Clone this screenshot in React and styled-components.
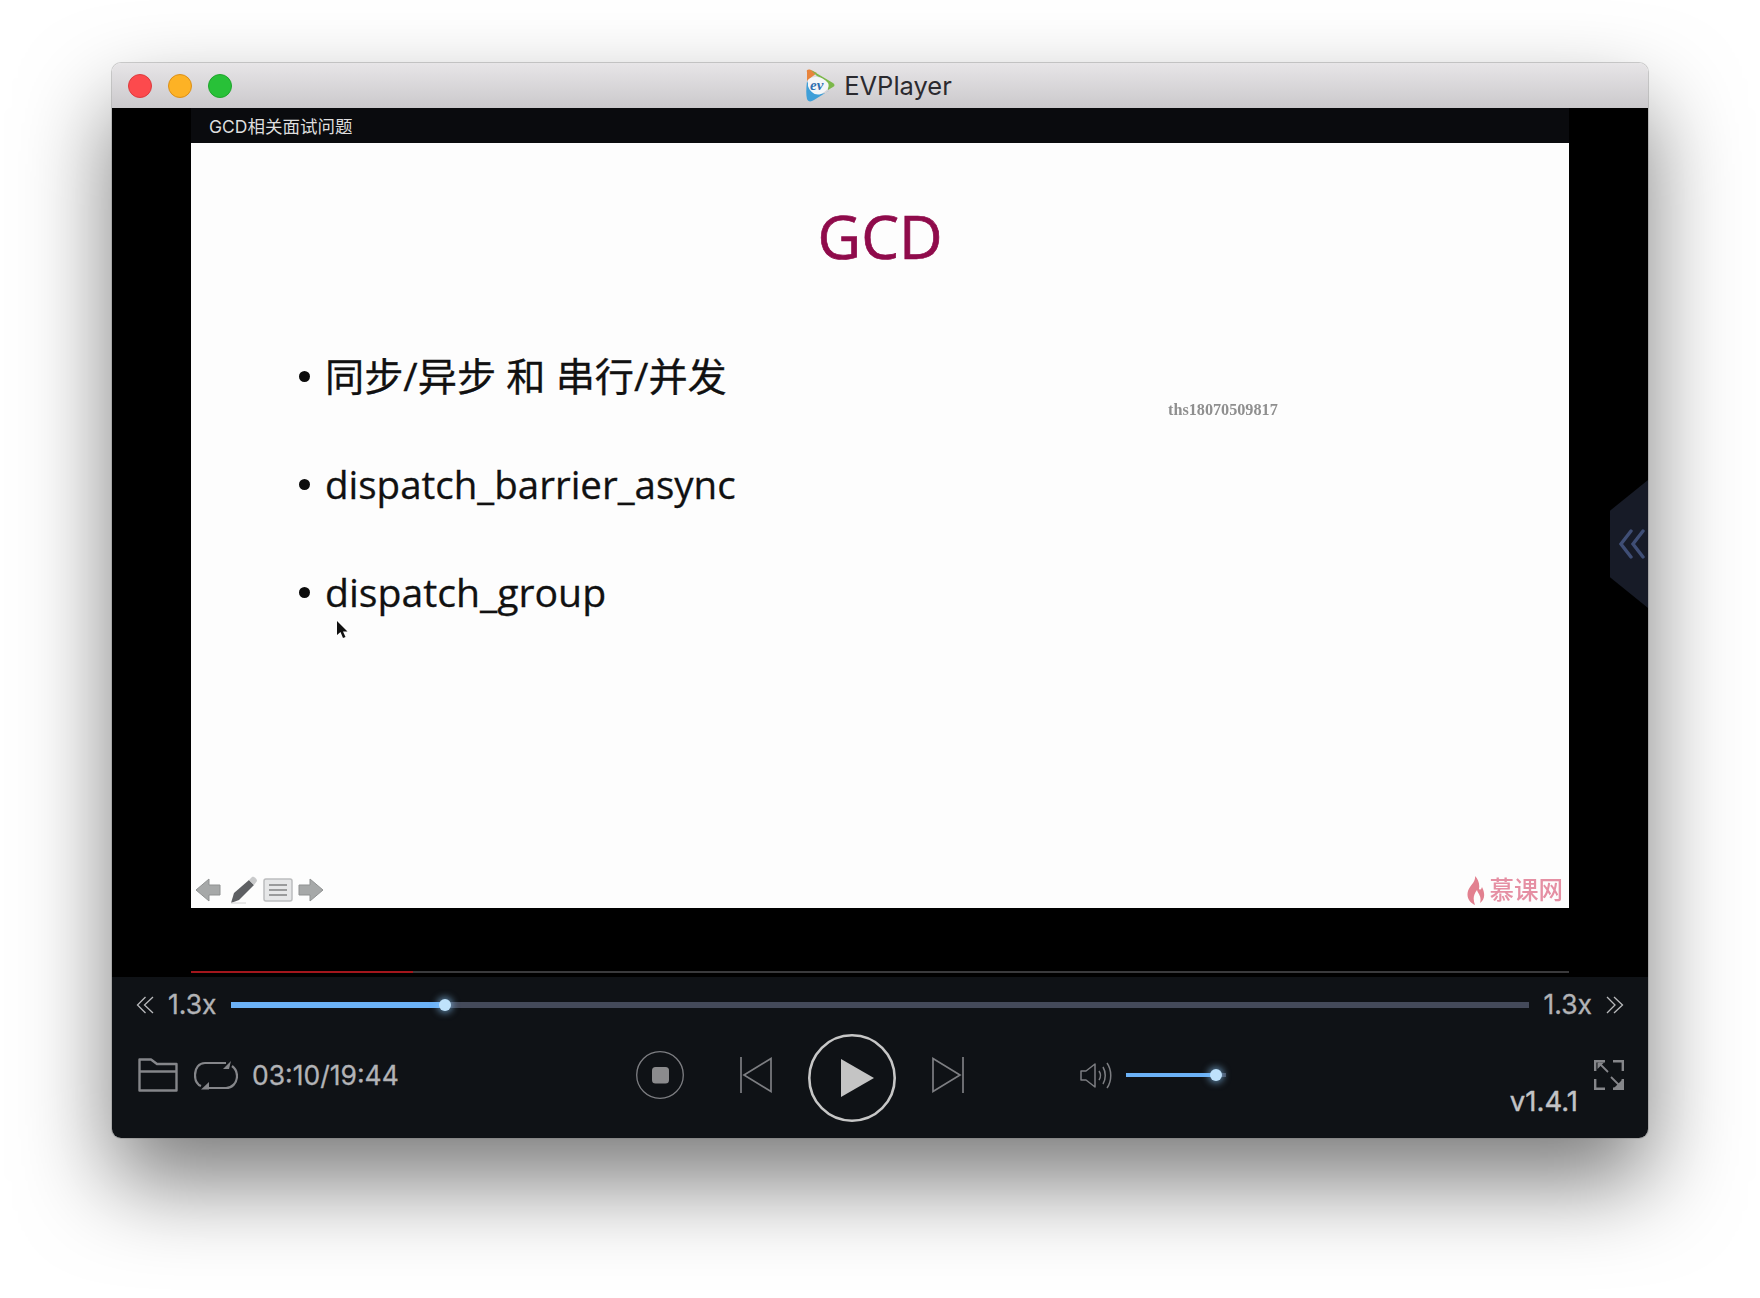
import styled, {createGlobalStyle} from 'styled-components';

const GlobalStyle = createGlobalStyle`
	html,
	body {
		margin: 0;
		background: #fff;
	}
	body {
		font-family: 'Inter', 'Noto Sans CJK SC', sans-serif;
	}
`;

function PlayerLogo() {
	return (
		<svg width="32" height="33" viewBox="0 0 32 33">
			<path d="M4 3 C3 1 5 0 8 1 L14 4 L6 10 L4 12 Z" fill="#e8843c" />
			<path d="M8 1 L30 14 C32 15.500 32 17 30 18 L25 21 C26 14 20 9 14 7 Z" fill="#7cb84a" />
			<path d="M4 12 C3 20 3 26 4 30 C5 33 8 33 11 31 L27 21 C20 27 10 27 4 12 Z" fill="#3f9fd8" />
			<path d="M5 11 C9 6 20 7 25 14 C27 18 24 22 18 25 C12 27 7 23 5 17 Z" fill="#f4f6f8" />
			<EvMark x="7" y="21">ev</EvMark>
		</svg>
	);
}

function FolderIcon() {
	return (
		<svg width="40" height="34" viewBox="0 0 40 34" fill="none" stroke="#85868a" strokeWidth="2.400">
			<path d="M1.500 32.500 V1.500 H13 L19 6 H38.500 V32.500 Z" strokeLinejoin="round" />
			<path d="M1.500 13.500 H38.500" />
		</svg>
	);
}

function LoopIcon() {
	return (
		<svg width="44" height="29" viewBox="0 0 44 29" fill="none" stroke="#85868a" strokeWidth="2.200">
			<path d="M7 25 C2 23 1 18 1 14 C1 7 5 2 11 2 H32" />
			<path d="M38 5 C42 8 43 11 43 15 C43 22 38 27 32 27 H13" />
			<path d="M29 8 L37 0 L35 8 Z" fill="#85868a" stroke="none" />
			<path d="M15 21 L7 28.500 L15 28.500 Z" fill="#85868a" stroke="none" />
		</svg>
	);
}

function StopIcon() {
	return (
		<svg width="48" height="48" viewBox="0 0 48 48" fill="none">
			<circle cx="24" cy="24" r="23.300" stroke="#7d7e82" strokeWidth="1.300" />
			<rect x="16" y="16" width="17" height="16.500" rx="3.500" fill="#8b8b8d" />
		</svg>
	);
}

function SkipIcon({flip}) {
	return (
		<svg width="32" height="36" viewBox="0 0 32 36" fill="none" stroke="#7d7e82" strokeWidth="1.700">
			{flip ? (
				<>
					<path d="M1 1.500 V34.500 L28 18 Z" />
					<path d="M31 0 V36" />
				</>
			) : (
				<>
					<path d="M31 1.500 V34.500 L4 18 Z" />
					<path d="M1 0 V36" />
				</>
			)}
		</svg>
	);
}

function PlayIcon() {
	return (
		<svg width="88" height="88" viewBox="0 0 88 88" fill="none">
			<circle cx="44" cy="44" r="42.700" stroke="#c6c6c6" strokeWidth="2.600" />
			<path d="M33 25 V63 L66 44 Z" fill="#c4c4c4" />
		</svg>
	);
}

function SpeakerIcon() {
	return (
		<svg width="32" height="27" viewBox="0 0 32 27" fill="none" stroke="#7d7e82" strokeWidth="1.500">
			<path d="M1 9 H6 L15 2 V25 L6 18 H1 Z" strokeLinejoin="round" />
			<path d="M19 9 C21 12 21 15 19 18" />
			<path d="M23 5 C26 10 26 17 23 22" />
			<path d="M27 1 C32 8 32 19 27 26" />
		</svg>
	);
}

function FullscreenIcon() {
	return (
		<svg width="30" height="30" viewBox="0 0 30 30" fill="none" stroke="#85868a" strokeWidth="2.400">
			<path d="M1.200 11 V1.200 H11" />
			<path d="M19 1.200 H28.800 V11" />
			<path d="M1.200 19 V28.800 H11" />
			<path d="M28.800 19 V28.800 H19" />
			<path d="M5 3 L14 12" strokeWidth="1.800" />
			<path d="M27 27 L17 17" strokeWidth="1.800" />
			<path d="M3.500 2.500 H10 L3.500 9 Z" fill="#85868a" stroke="none" />
			<path d="M28 28 H20 L28 20 Z" fill="#85868a" stroke="none" />
		</svg>
	);
}

function DoubleChevron({flip}) {
	return (
		<svg width="18" height="18" viewBox="0 0 18 18" fill="none" stroke="#b8b9bc" strokeWidth="1.300">
			{flip ? (
				<>
					<path d="M1 1 L9 9 L1 17" />
					<path d="M8 1 L16.500 9 L8 17" />
				</>
			) : (
				<>
					<path d="M9.500 1 L1.500 9 L9.500 17" />
					<path d="M17 1 L8.500 9 L17 17" />
				</>
			)}
		</svg>
	);
}

function SlideArrow({flip}) {
	return (
		<svg width="26" height="24" viewBox="0 0 26 24">
			<path
				d={flip ? 'M1 7 H12 V1 L25 12 L12 23 V17 H1 Z' : 'M25 7 H14 V1 L1 12 L14 23 V17 H25 Z'}
				fill="#a6a8a8"
				stroke="#8f9191"
				strokeLinejoin="round"
			/>
		</svg>
	);
}

function PenIcon() {
	return (
		<svg width="32" height="28" viewBox="-4 0 32 28">
			<path d="M1 27 L4 17 L19 4 L24 9 L9 24 Z" fill="#5e6063" />
			<path d="M19 4 L22 1 C24 0 27 3 27 5 L24 9 Z" fill="#c9cacb" />
			<path d="M1 27 H16" stroke="#d2d2d2" strokeWidth="1" />
		</svg>
	);
}

function MenuIcon() {
	return (
		<svg width="30" height="24" viewBox="0 0 30 24" fill="none">
			<rect x="1" y="1" width="28" height="22" rx="2" fill="#e6e7e8" stroke="#bcbdbe" strokeWidth="1.500" />
			<path d="M6 7 H24 M6 12 H24 M6 17 H24" stroke="#9a9b9c" strokeWidth="2" />
		</svg>
	);
}

function FlameIcon() {
	return (
		<svg width="18" height="29" viewBox="0 0 18 29">
			<path
				d="M8 0 C9 6 3 9 1 15 C-1 22 3 27 8 29 C6 24 6 19 10 14 C11 18 15 20 13 27 C17 24 19 19 15 11 C14 14 13 14 12 13 C13 8 11 3 8 0 Z"
				fill="#e2808f"
			/>
		</svg>
	);
}

function SideChevrons() {
	return (
		<svg width="26" height="30" viewBox="0 0 26 30" fill="none" stroke="#3f4e75" strokeWidth="3.400" strokeLinecap="round">
			<path d="M12 2 L2 15 L12 28" />
			<path d="M24 2 L14 15 L24 28" />
		</svg>
	);
}

function CursorIcon() {
	return (
		<svg width="12" height="18" viewBox="0 0 12 18">
			<path d="M1 0 V14 L4.500 11 L7 17 L9.500 16 L7 10.500 H11.500 Z" fill="#111" />
		</svg>
	);
}

export default function App() {
	return (
		<>
			<GlobalStyle />
			<Page>
				<Window>
					<TitleBar>
						<Lights>
							<Light color="#fc4a4d" edge="#dd3b3e" />
							<Light color="#fdb225" edge="#dc9018" />
							<Light color="#28c138" edge="#1fa52c" />
						</Lights>
						<PlayerLogo />
						<AppName>EVPlayer</AppName>
					</TitleBar>
					<Stage>
						<VideoColumn>
							<VideoHeader>GCD相关面试问题</VideoHeader>
							<Slide>
								<SlideTitle>GCD</SlideTitle>
								<BulletList>
									<Bullet size="39.200px">同步/异步 和 串行/并发</Bullet>
									<Bullet size="38.500px">dispatch_barrier_async</Bullet>
									<Bullet size="39.200px">dispatch_group</Bullet>
								</BulletList>
								<Watermark>ths18070509817</Watermark>
								<Cursor>
									<CursorIcon />
								</Cursor>
								<SlideFooter>
									<SlideTools>
										<SlideArrow />
										<PenIcon />
										<MenuIcon />
										<SlideArrow flip />
									</SlideTools>
									<SlideBrand>
										<FlameIcon />
										<BrandName>慕课网</BrandName>
									</SlideBrand>
								</SlideFooter>
							</Slide>
							<Progress>
								<ProgressFill />
							</Progress>
						</VideoColumn>
						<SideTab>
							<SideChevrons />
						</SideTab>
					</Stage>
					<Controls>
						<SpeedRow>
							<DoubleChevron />
							<ControlText>1.3x</ControlText>
							<Track>
								<TrackFill style={{width: `${(214 / 1296) * 100}%`}} />
								<Thumb />
							</Track>
							<ControlText>1.3x</ControlText>
							<DoubleChevron flip />
						</SpeedRow>
						<ButtonRow>
							<LeftGroup>
								<FolderIcon />
								<LoopIcon />
								<TimeText>03:10/19:44</TimeText>
							</LeftGroup>
							<Transport>
								<RaisedSlot>
									<StopIcon />
								</RaisedSlot>
								<RaisedSlot gap="56px">
									<SkipIcon />
								</RaisedSlot>
								<PlaySlot>
									<PlayIcon />
								</PlaySlot>
								<RaisedSlot>
									<SkipIcon flip />
								</RaisedSlot>
							</Transport>
							<VolumeGroup>
								<SpeakerIcon />
								<VolumeTrack>
									<VolumeFill />
									<Thumb />
								</VolumeTrack>
							</VolumeGroup>
							<RightGroup>
								<Version>v1.4.1</Version>
								<FullscreenSlot>
									<FullscreenIcon />
								</FullscreenSlot>
							</RightGroup>
						</ButtonRow>
					</Controls>
				</Window>
			</Page>
		</>
	);
}

const Page = styled.div`
	width: 1760px;
	height: 1298px;
	padding: 63px 112px 0;
	box-sizing: border-box;
	overflow: hidden;
`;

const Window = styled.div`
	display: flex;
	flex-direction: column;
	width: 1536px;
	height: 1075px;
	border-radius: 9px;
	box-shadow: 0 0 0 1px rgba(120, 120, 120, 0.35), 0 44px 90px rgba(0, 0, 0, 0.52);
	overflow: hidden;
`;

const TitleBar = styled.header`
	position: relative;
	display: flex;
	flex-shrink: 0;
	align-items: center;
	justify-content: center;
	gap: 9px;
	height: 45px;
	padding-right: 5px;
	background: linear-gradient(#e7e5e7, #cbc9cc);
	box-sizing: border-box;
`;

const Lights = styled.div`
	position: absolute;
	top: 11px;
	left: 16px;
	display: flex;
	gap: 16px;
`;

const Light = styled.span`
	width: 24px;
	height: 24px;
	border: 1px solid ${props => props.edge};
	border-radius: 50%;
	background: ${props => props.color};
	box-sizing: border-box;
`;

const EvMark = styled.text`
	fill: #2f6fb0;
	font-family: 'Liberation Serif', serif;
	font-size: 15px;
	font-style: italic;
	font-weight: 700;
`;

const AppName = styled.span`
	color: #2b2a2f;
	font-size: 25.500px;
`;

const Stage = styled.div`
	position: relative;
	display: flex;
	flex-shrink: 0;
	justify-content: center;
	height: 869px;
	background: #000;
`;

const VideoColumn = styled.div`
	display: flex;
	flex-direction: column;
	width: 1378px;
`;

const VideoHeader = styled.div`
	display: flex;
	flex-shrink: 0;
	align-items: center;
	height: 35px;
	padding-left: 18px;
	background: #0a0b0e;
	color: #dedede;
	font-size: 17.500px;
	box-sizing: border-box;
`;

const Slide = styled.section`
	position: relative;
	display: flex;
	flex-shrink: 0;
	flex-direction: column;
	height: 765px;
	background: #fdfdfd;
	color: #111;
	font-family: 'Open Sans', 'Noto Sans CJK SC', sans-serif;
`;

const SlideTitle = styled.h1`
	margin: 48px 0 0;
	color: #8f0b4b;
	font-size: 60px;
	font-weight: 500;
	line-height: 90px;
	text-align: center;
	-webkit-text-stroke: 0.7px #8f0b4b;
`;

const BulletList = styled.ul`
	display: flex;
	flex-direction: column;
	gap: 50px;
	margin: 66px 0 0;
	padding: 0 0 0 134px;
	list-style: none;
`;

const Bullet = styled.li`
	position: relative;
	height: 58px;
	font-size: ${props => props.size};
	line-height: 58px;
	white-space: pre;
	-webkit-text-stroke: 0.3px #111;
	&::before {
		content: '';
		position: absolute;
		top: 24px;
		left: -26px;
		width: 11px;
		height: 11px;
		border-radius: 50%;
		background: #0c0c0c;
	}
`;

const Watermark = styled.span`
	position: absolute;
	top: 258px;
	left: 977px;
	color: #8f8f8f;
	font-family: 'Liberation Serif', serif;
	font-size: 16.200px;
	font-weight: 700;
	filter: blur(0.7px);
`;

const Cursor = styled.span`
	position: absolute;
	top: 478px;
	left: 145px;
`;

const SlideFooter = styled.div`
	display: flex;
	align-items: flex-end;
	justify-content: space-between;
	margin-top: auto;
	padding: 0 6px 3px 4px;
`;

const SlideTools = styled.div`
	display: flex;
	align-items: center;
	gap: 5px;
	margin-bottom: 1px;
	filter: blur(0.4px);
`;

const SlideBrand = styled.div`
	display: flex;
	align-items: center;
	gap: 5px;
	filter: blur(0.4px);
`;

const BrandName = styled.span`
	color: #e58fa3;
	font-size: 24.500px;
	font-weight: 500;
	line-height: 30px;
`;

const Progress = styled.div`
	height: 2px;
	margin-top: 63px;
	background: #3a3a3c;
`;

const ProgressFill = styled.div`
	width: 222px;
	height: 100%;
	background: #a3161c;
`;

const SideTab = styled.div`
	position: absolute;
	top: 372px;
	right: 0;
	display: flex;
	align-items: center;
	justify-content: center;
	width: 38px;
	height: 128px;
	padding-left: 6px;
	background: #171b27;
	box-sizing: border-box;
	clip-path: polygon(100% 0, 100% 100%, 0 76%, 0 24%);
`;

const Controls = styled.div`
	display: flex;
	flex: 1;
	flex-direction: column;
	background: #0f1216;
`;

const SpeedRow = styled.div`
	display: flex;
	flex-shrink: 0;
	align-items: center;
	gap: 14px;
	height: 56px;
	padding: 0 24px;
`;

const ControlText = styled.span`
	margin-top: -2px;
	color: #b2b3b6;
	font-size: 26.500px;
	line-height: 30px;
	white-space: nowrap;
	-webkit-text-stroke: 0.3px #b2b3b6;
`;

const TimeText = styled(ControlText)`
	margin-top: 0;
	margin-left: -2px;
`;

const Track = styled.div`
	position: relative;
	display: flex;
	flex: 1;
	align-items: center;
	height: 6px;
	background: #444a5a;
`;

const TrackFill = styled.div`
	height: 100%;
	background: #6cb2f7;
`;

const Thumb = styled.span`
	flex-shrink: 0;
	width: 12px;
	height: 12px;
	margin-left: -6px;
	border-radius: 50%;
	background: #bfe2fb;
	box-shadow: 0 0 7px 2px rgba(140, 200, 250, 0.6);
`;

const ButtonRow = styled.div`
	display: flex;
	flex: 1;
	align-items: flex-start;
	padding: 0 24px 0 26px;
`;

const LeftGroup = styled.div`
	display: flex;
	flex-shrink: 0;
	align-items: center;
	gap: 16px;
	width: 498px;
	height: 34px;
	margin-top: 25px;
`;

const Transport = styled.div`
	display: flex;
	flex-shrink: 0;
	align-items: center;
	gap: 36px;
	height: 88px;
	margin-top: 1px;
`;

const RaisedSlot = styled.span`
	display: flex;
	margin-bottom: 7px;
	margin-left: ${props => (props.gap ? '20px' : '0')};
`;

const PlaySlot = styled.span`
	display: flex;
`;

const VolumeGroup = styled.div`
	display: flex;
	flex-shrink: 0;
	align-items: center;
	gap: 14px;
	height: 34px;
	margin-top: 25px;
	margin-left: 116px;
`;

const VolumeTrack = styled.div`
	display: flex;
	align-items: center;
	width: 100px;
	height: 4px;
	background: #444a5a;
`;

const VolumeFill = styled.div`
	flex-shrink: 0;
	width: 90px;
	height: 100%;
	background: #6cb2f7;
`;

const RightGroup = styled.div`
	display: flex;
	flex: 1;
	align-items: flex-start;
	justify-content: flex-end;
	gap: 16px;
`;

const Version = styled.span`
	margin-top: 53px;
	color: #c2c3c6;
	font-size: 27.500px;
	line-height: 30px;
	-webkit-text-stroke: 0.4px #c2c3c6;
`;

const FullscreenSlot = styled.span`
	display: flex;
	margin-top: 27px;
`;
